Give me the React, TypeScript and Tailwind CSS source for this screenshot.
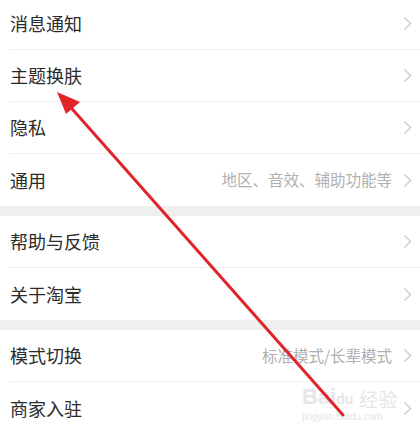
const SECTIONS: { label: string; hint?: string }[][] = [
  [
    { label: '消息通知' },
    { label: '主题换肤' },
    { label: '隐私' },
    { label: '通用', hint: '地区、音效、辅助功能等' },
  ],
  [{ label: '帮助与反馈' }, { label: '关于淘宝' }],
  [{ label: '模式切换', hint: '标准模式/长辈模式' }, { label: '商家入驻' }],
];

function Chevron() {
  return (
    <svg width="9" height="15" viewBox="0 0 9 15" className="shrink-0">
      <path d="M1.5 1.5 L7.5 7.5 L1.5 13.5" fill="none" stroke="#c9c9c9" strokeWidth="1.4" />
    </svg>
  );
}

function Row({ label, hint, last }: { label: string; hint?: string; last: boolean }) {
  return (
    <div className="pl-[9px] bg-white">
      <div
        className={`h-[52px] flex items-center pr-[8px] ${
          last ? '' : 'border-b border-[#efefef]'
        }`}
      >
        <span className="text-[18px] text-[#2b2b2b] pl-px flex-1">{label}</span>
        {hint && <span className="text-[15.5px] text-[#b0b0b0] mr-[11px]">{hint}</span>}
        <Chevron />
      </div>
    </div>
  );
}

export default function App() {
  return (
    <div
      className="relative w-[420px] h-[435px] overflow-hidden bg-white"
      style={{ fontFamily: '"Noto Sans CJK SC", "Noto Sans", sans-serif' }}
    >
      <div className="-mt-[2px] flex flex-col">
        {SECTIONS.map((rows, i) => (
          <div key={i} className={i > 0 ? 'border-t-[10px] border-[#efefef]' : ''}>
            {rows.map((r, j) => (
              <Row key={r.label} label={r.label} hint={r.hint} last={j === rows.length - 1} />
            ))}
          </div>
        ))}
      </div>

      {/* watermark */}
      <div className="absolute left-[302px] top-[386px] flex flex-col items-start gap-[4px] text-[#e6e6e6] pointer-events-none">
        <div className="flex items-end gap-[6px] leading-none">
          <span className="text-[22px] font-bold leading-none" style={{ fontFamily: '"Liberation Sans", sans-serif' }}>
            Bai<span className="text-[14px]">du</span>
          </span>
          <span className="text-[19px] leading-none">经验</span>
        </div>
        <span className="text-[10px] leading-none" style={{ fontFamily: '"Liberation Sans", sans-serif' }}>
          jingyan.baidu.com
        </span>
      </div>

      {/* annotation arrow */}
      <svg className="absolute inset-0 pointer-events-none" width="420" height="435">
        <line x1="343" y1="415" x2="66" y2="102" stroke="#e0242a" strokeWidth="3" strokeLinecap="round" />
        <polygon points="57,92 80,102 66,114" fill="#e0242a" />
      </svg>
    </div>
  );
}
